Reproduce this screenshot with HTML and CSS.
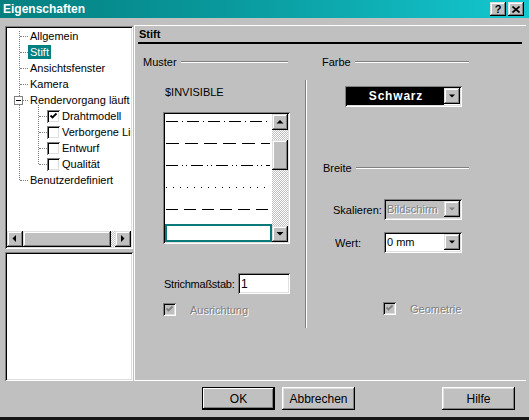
FILE: index.html
```html
<!DOCTYPE html>
<html lang="de">
<head>
<meta charset="utf-8">
<title>Eigenschaften</title>
<link rel="stylesheet" href="styles.css">
</head>
<body>
<div class="window">
  <div class="titlebar">
    <span class="title">Eigenschaften</span>
    <div class="caption-btns">
      <span class="cbtn">?</span>
      <span class="cbtn"><svg class="x-icon" viewBox="0 0 8 7"><path d="M0.5 0.5 L7.5 6.5 M7.5 0.5 L0.5 6.5"/></svg></span>
    </div>
  </div>

  <div class="main">
    <div class="leftcol">
      <div class="treebox">
        <ul class="tree">
          <li class="node"><span class="lbl">Allgemein</span></li>
          <li class="node"><span class="lbl selected">Stift</span></li>
          <li class="node"><span class="lbl">Ansichtsfenster</span></li>
          <li class="node"><span class="lbl">Kamera</span></li>
          <li class="node open"><span class="exp"></span><span class="lbl">Rendervorgang läuft</span></li>
          <li class="subwrap">
            <ul class="sub">
              <li class="child"><span class="cb"><svg class="check" viewBox="0 0 9 9"><path d="M1.5 3.5 L3.5 5.5 L7.5 1.5"/></svg></span><span class="clbl">Drahtmodell</span></li>
              <li class="child"><span class="cb"></span><span class="clbl">Verborgene Linien</span></li>
              <li class="child"><span class="cb"></span><span class="clbl">Entwurf</span></li>
              <li class="child"><span class="cb"></span><span class="clbl">Qualität</span></li>
            </ul>
          </li>
          <li class="node"><span class="lbl">Benutzerdefiniert</span></li>
        </ul>
        <div class="hscroll">
          <span class="sbtn"><svg class="arrow" viewBox="0 0 16 16"><polygon points="9,4 9,11 5.5,7.5"/></svg></span>
          <span class="hthumb"></span>
          <span class="track"></span>
          <span class="sbtn"><svg class="arrow" viewBox="0 0 16 16"><polygon points="6,4 6,11 9.5,7.5"/></svg></span>
        </div>
      </div>
      <div class="infobox"></div>
    </div>

    <div class="panel">
      <div class="panel-head">Stift</div>
      <div class="panel-body">
        <div class="col-muster">
          <div class="group-head"><span>Muster</span><span class="rule"></span></div>
          <div class="invisible">$INVISIBLE</div>
          <div class="listbox">
            <div class="list-items">
              <div class="item"><svg class="pat" viewBox="0 0 104 2"><line x1="0" y1="0.5" x2="104" y2="0.5" stroke-dasharray="12 4 1 4"/></svg></div>
              <div class="item"><svg class="pat" viewBox="0 0 104 2"><line x1="0" y1="0.5" x2="104" y2="0.5" stroke-dasharray="13 6"/></svg></div>
              <div class="item"><svg class="pat" viewBox="0 0 104 2"><line x1="0" y1="0.5" x2="104" y2="0.5" stroke-dasharray="12 4 1 3 1 4"/></svg></div>
              <div class="item"><svg class="pat" viewBox="0 0 104 2"><line x1="0" y1="0.5" x2="104" y2="0.5" stroke-dasharray="1 6"/></svg></div>
              <div class="item"><svg class="pat" viewBox="0 0 104 2"><line x1="0" y1="0.5" x2="104" y2="0.5" stroke-dasharray="12 6"/></svg></div>
              <div class="item sel"></div>
            </div>
            <div class="vscroll">
              <span class="sbtn"><svg class="arrow" viewBox="0 0 16 16"><polygon points="4.5,9.5 11.5,9.5 8,6"/></svg></span>
              <span class="track top"></span>
              <span class="vthumb"></span>
              <span class="track"></span>
              <span class="sbtn"><svg class="arrow" viewBox="0 0 16 16"><polygon points="4.5,6 11.5,6 8,9.5"/></svg></span>
            </div>
          </div>
          <div class="scale-row">
            <span class="scale-label">Strichmaßstab:</span>
            <span class="field scale-input">1</span>
          </div>
          <div class="check-row">
            <span class="cb disabled"><svg class="check" viewBox="0 0 9 9"><path d="M1.5 3.5 L3.5 5.5 L7.5 1.5"/></svg></span>
            <span class="dis-text">Ausrichtung</span>
          </div>
        </div>

        <div class="vsep"></div>

        <div class="col-farbe">
          <div class="group-head farbe"><span>Farbe</span><span class="rule"></span></div>
          <div class="combo color-combo">
            <span class="cval black">Schwarz</span>
            <span class="sbtn"><svg class="arrow" viewBox="0 0 16 16"><polygon points="5,6.5 11,6.5 8,9.5"/></svg></span>
          </div>
          <div class="group-head breite"><span>Breite</span><span class="rule"></span></div>
          <div class="form-grid">
            <span class="flabel">Skalieren:</span>
            <div class="combo disabled-combo">
              <span class="cval dis-text">Bildschirm</span>
              <span class="sbtn"><svg class="arrow grey" viewBox="0 0 16 16"><polygon points="5,6.5 11,6.5 8,9.5"/></svg></span>
            </div>
            <span class="flabel wert">Wert:</span>
            <div class="combo">
              <span class="cval">0 mm</span>
              <span class="sbtn"><svg class="arrow" viewBox="0 0 16 16"><polygon points="5,6.5 11,6.5 8,9.5"/></svg></span>
            </div>
          </div>
          <div class="check-row geo">
            <span class="cb disabled"><svg class="check" viewBox="0 0 9 9"><path d="M1.5 3.5 L3.5 5.5 L7.5 1.5"/></svg></span>
            <span class="dis-text">Geometrie</span>
          </div>
        </div>
      </div>
    </div>
  </div>

  <div class="footer">
    <span class="btn default ok">OK</span>
    <span class="btn cancel">Abbrechen</span>
    <span class="btn help">Hilfe</span>
  </div>
</div>
</body>
</html>
```

FILE: styles.css
```css
* { box-sizing: border-box; }
html, body { margin: 0; padding: 0; }
body {
  width: 529px;
  height: 420px;
  overflow: hidden;
  background: #c0c0c0;
  font-family: "Liberation Sans", Arial, sans-serif;
  font-size: 11px;
  color: #000;
}
ul { list-style: none; margin: 0; padding: 0; }

.window {
  width: 529px;
  height: 420px;
  display: flex;
  flex-direction: column;
  border-bottom: 3px solid #161616;
}

/* title bar */
.titlebar {
  height: 18px;
  flex: none;
  display: flex;
  align-items: center;
  padding-left: 3px;
  background: linear-gradient(to right, #047f80 0%, #0a9ea2 50%, #14c8d0 100%);
}
.title { flex: 1; color: #fff; font-weight: bold; font-size: 12px; }
.caption-btns { display: flex; gap: 2px; margin-right: 5px; }
.cbtn {
  width: 16px;
  height: 14px;
  background: #c0c0c0;
  box-shadow: inset -1px -1px #000, inset 1px 1px #dfdfdf, inset -2px -2px #808080, inset 2px 2px #fff;
  display: flex;
  align-items: center;
  justify-content: center;
  font-weight: bold;
  font-size: 11px;
  line-height: 1;
}
.x-icon { width: 8px; height: 7px; }
.x-icon path { stroke: #000; stroke-width: 1.6; fill: none; }

/* main area */
.main { display: flex; height: 356px; margin-top: 7px; flex: none; }
.leftcol { width: 128px; margin-left: 5px; padding-top: 1px; display: flex; flex-direction: column; }

.treebox, .infobox, .listbox, .field, .combo {
  box-shadow: inset 1px 1px #808080, inset -1px -1px #fff, inset 2px 2px #000, inset -2px -2px #dfdfdf;
}
.treebox {
  height: 223px;
  background: #fff;
  padding: 2px;
  display: flex;
  flex-direction: column;
}
.infobox { height: 129px; margin-top: 3px; background: #fff; }

/* tree */
.tree { flex: 1; position: relative; overflow: hidden; }
.tree::before {
  content: "";
  position: absolute;
  left: 12px;
  top: 3px;
  height: 149px;
  border-left: 1px dotted #808080;
}
.node { height: 16px; position: relative; display: flex; align-items: center; white-space: nowrap; }
.node::before {
  content: "";
  position: absolute;
  left: 13px;
  top: 8px;
  width: 8px;
  border-top: 1px dotted #808080;
}
.lbl {
  margin-left: 21px;
  padding: 0 2px;
  line-height: 14px;
  height: 14px;
}
.lbl.selected { background: #008080; color: #fff; }
.exp {
  position: absolute;
  left: 7px;
  top: 4px;
  width: 9px;
  height: 9px;
  border: 1px solid #808080;
  background: #fff;
  z-index: 1;
}
.exp::after {
  content: "";
  position: absolute;
  left: 1px;
  top: 3px;
  width: 5px;
  border-top: 1px solid #000;
}
.subwrap { position: relative; }
.sub { position: relative; }
.sub::before {
  content: "";
  position: absolute;
  left: 31px;
  top: -3px;
  height: 59px;
  border-left: 1px dotted #808080;
}
.child { height: 16px; display: flex; align-items: center; position: relative; white-space: nowrap; }
.child::before {
  content: "";
  position: absolute;
  left: 32px;
  top: 8px;
  width: 8px;
  border-top: 1px dotted #808080;
}
.child .cb { margin-left: 40px; }
.clbl { margin-left: 2px; }

/* checkbox */
.cb {
  width: 13px;
  height: 13px;
  flex: none;
  background: #fff;
  box-shadow: inset 1px 1px #808080, inset -1px -1px #fff, inset 2px 2px #000, inset -2px -2px #dfdfdf;
  display: flex;
  align-items: center;
  justify-content: center;
}
.check { width: 9px; height: 9px; }
.check path { stroke: #000; stroke-width: 1.8; fill: none; }
.cb.disabled { background: #c0c0c0; }
.cb.disabled .check path { stroke: #808080; }

/* scroll bars */
.sbtn {
  width: 16px;
  height: 16px;
  flex: none;
  background: #c0c0c0;
  box-shadow: inset -1px -1px #000, inset 1px 1px #dfdfdf, inset -2px -2px #808080, inset 2px 2px #fff;
  display: flex;
}
.arrow { width: 16px; height: 16px; }
.arrow polygon { fill: #000; }
.arrow.grey polygon { fill: #808080; }
.track {
  flex: 1;
  background: repeating-conic-gradient(#c0c0c0 0 25%, #fff 0 50%) 0 0 / 2px 2px;
}
.hscroll { height: 16px; display: flex; flex: none; }
.hthumb, .vthumb {
  background: #c0c0c0;
  box-shadow: inset -1px -1px #000, inset 1px 1px #dfdfdf, inset -2px -2px #808080, inset 2px 2px #fff;
  flex: none;
}
.hthumb { width: 88px; }

/* right panel */
.panel {
  width: 392px;
  margin-left: 1px;
  height: 356px;
  border-top: 1px solid #fff;
  border-left: 1px solid #fff;
  border-bottom: 1px solid #fff;
  display: flex;
  flex-direction: column;
}
.panel-head {
  height: 18px;
  margin: 0 4px 0 3px;
  padding-left: 1px;
  font-weight: bold;
  line-height: 16px;
  border-bottom: 2px solid #000;
}
.panel-body { display: flex; align-items: flex-start; }

.group-head { display: flex; align-items: center; height: 14px; margin-top: 11px; }
.rule { flex: 1; margin-left: 4px; border-top: 1px solid #808080; border-bottom: 1px solid #fff; }

.col-muster { width: 170px; padding-left: 8px; flex: none; }
.col-muster .rule { margin-right: 17px; }
.invisible { margin-top: 16px; margin-left: 22px; line-height: 14px; }

.listbox {
  margin-top: 13px;
  margin-left: 20px;
  width: 127px;
  height: 132px;
  background: #fff;
  padding: 2px;
  display: flex;
}
.list-items { flex: 1; overflow: hidden; }
.item { height: 22px; padding-top: 7px; padding-left: 1px; }
.pat { display: block; width: 104px; height: 2px; }
.pat line { stroke: #000; stroke-width: 1; }
.item.sel { height: 18px; border: 2px solid #0a7a78; padding: 0; }
.vscroll { width: 16px; display: flex; flex-direction: column; }
.track.top { flex: none; height: 10px; }
.vthumb { height: 30px; }

.scale-row {
  margin-top: 29px;
  margin-left: 21px;
  display: flex;
  align-items: center;
}
.scale-label { width: 74px; letter-spacing: -0.25px; white-space: nowrap; }
.field { background: #fff; padding: 3px 3px 0; height: 21px; line-height: 16px; }
.scale-input { width: 52px; font-size: 12px; }

.check-row { display: flex; align-items: center; margin-top: 9px; margin-left: 20px; height: 13px; }
.check-row .dis-text { margin-left: 14px; }
.dis-text { color: #808080; text-shadow: 1px 1px #fff; }

.vsep {
  width: 2px;
  height: 248px;
  margin-top: 36px;
  border-left: 1px solid #808080;
  border-right: 1px solid #fff;
  flex: none;
}

.col-farbe { flex: 1; padding-left: 15px; }
.col-farbe .rule { margin-right: 57px; }
.group-head.breite { margin-top: 54px; margin-left: 1px; }

.combo { display: flex; height: 21px; padding: 2px; background: #fff; }
.cval { flex: 1; padding-left: 1px; line-height: 17px; font-size: 11px; white-space: nowrap; overflow: hidden; }
.color-combo { margin-top: 17px; margin-left: 23px; width: 117px; }
.cval.black {
  background: #000;
  color: #fff;
  font-weight: bold;
  text-align: center;
  letter-spacing: 0.8px;
  font-size: 12px;
}
.disabled-combo { background: #c0c0c0; }

.form-grid {
  display: grid;
  grid-template-columns: 51px 78px;
  row-gap: 12px;
  align-items: center;
  margin-top: 24px;
  padding-left: 11px;
}
.flabel { font-size: 11px; white-space: nowrap; }
.flabel.wert { padding-left: 2px; }

.check-row.geo { margin-top: 49px; margin-left: 61px; }

/* footer */
.footer {
  flex: 1;
  display: flex;
  align-items: flex-start;
  padding-top: 6px;
  padding-right: 14px;
}
.btn {
  width: 73px;
  height: 23px;
  display: flex;
  align-items: center;
  justify-content: center;
  font-size: 12px;
  background: #c0c0c0;
  box-shadow: inset -1px -1px #000, inset 1px 1px #fff, inset -2px -2px #808080, inset 2px 2px #dfdfdf;
}
.btn.default {
  box-shadow: inset 0 0 0 1px #000, inset -2px -2px #000, inset 2px 2px #fff, inset -3px -3px #808080;
}
.ok { margin-left: 202px; }
.cancel { margin-left: 7px; }
.help { margin-left: auto; }
```
